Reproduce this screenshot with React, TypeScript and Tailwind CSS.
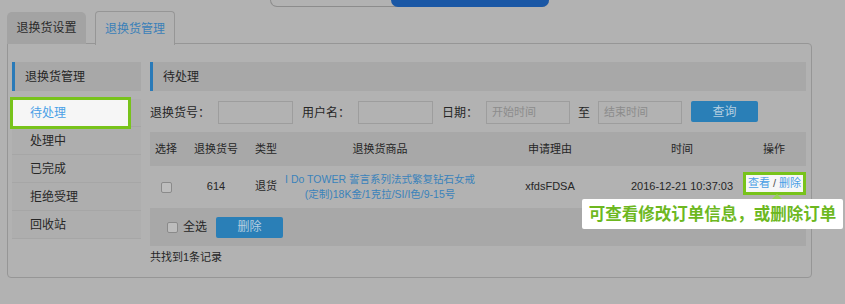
import React from 'react';

const sideItems = ['处理中', '已完成', '拒绝受理', '回收站'];

const Box = () => (
  <span className="inline-block w-[11px] h-[11px] border border-[#8a8a8a] rounded-[2px] bg-[#bdbdbd]"></span>
);

const Field = ({ w, hint }: { w: string; hint?: string }) => (
  <div className={`${w} h-[23px] border border-[#9d9d9d] flex items-center pl-[5px] text-[11px] text-[#8c8c8c]`}>
    {hint}
  </div>
);

export default function App() {
  return (
    <div className="w-[845px] h-[304px] overflow-hidden bg-[#b2b2b2] text-[#262626] font-['Liberation_Sans','Noto_Sans_CJK_SC',sans-serif]">
      {/* top switcher, cut off by the window */}
      <div className="ml-[270px] w-[279px] h-[7px] border border-t-0 border-[#8c8c8c] rounded-b-[12px] flex justify-end">
        <div className="w-[158px] h-[7px] -mr-px bg-[#1a57a5] rounded-b-[12px]"></div>
      </div>

      {/* tabs */}
      <div className="relative z-10 mt-[4px] pl-[7px] flex items-end text-[12px]">
        <div className="w-[79px] h-[32px] bg-[#a3a3a3] rounded-t-[5px] flex items-center justify-center text-[#2b2b2b]">
          退换货设置
        </div>
        <div className="ml-[9px] w-[80px] h-[34px] -mb-px bg-[#b2b2b2] border border-b-0 border-[#969696] rounded-t-[4px] flex items-center justify-center text-[#3a80b8]">
          退换货管理
        </div>
      </div>

      {/* panel */}
      <div className="-mt-px ml-[7px] w-[805px] h-[235px] border border-[#969696] rounded-tr-[4px] rounded-b-[4px] flex gap-[9px] pl-[4px] pt-[18px]">
        {/* sidebar */}
        <div className="w-[129px] text-[12px]">
          <div className="h-[29px] bg-[#a8a8a8] border-l-[3px] border-[#2a7ab8] pl-[10px] flex items-center">
            退换货管理
          </div>
          <div className="mt-[8px]">
            <div className="relative h-[28px] bg-[#aeaeae] border-b border-[#a6a6a6]">
              <div className="absolute -left-[2px] -top-[2px] w-[121px] h-[32px] border-[3px] border-[#78c31b] bg-[#f6f6f6] flex items-center pl-[17px] text-[#4aa0e6]">
                待处理
              </div>
            </div>
            {sideItems.map((t) => (
              <div key={t} className="h-[28px] bg-[#aeaeae] border-b border-[#a6a6a6] pl-[18px] flex items-center">
                {t}
              </div>
            ))}
          </div>
        </div>

        {/* content */}
        <div className="w-[656px]">
          <div className="h-[29px] bg-[#a8a8a8] border-l-[3px] border-[#2a7ab8] pl-[10px] flex items-center text-[12px]">
            待处理
          </div>

          <div className="mt-[10px] h-[23px] flex items-center text-[12px]">
            <span className="w-[68px]">退换货号：</span>
            <Field w="w-[75px]" />
            <span className="ml-[9px] w-[56px]">用户名：</span>
            <Field w="w-[75px]" />
            <span className="ml-[9px] w-[44px]">日期：</span>
            <Field w="w-[84px]" hint="开始时间" />
            <span className="ml-[8px] w-[20px]">至</span>
            <Field w="w-[84px]" hint="结束时间" />
            <button className="ml-[9px] w-[67px] h-[21px] self-start bg-[#2a7fb7] rounded-[2px] text-[#b5cfe1] text-[12px]">
              查询
            </button>
          </div>

          <div className="mt-[8px] h-[34px] bg-[#a8a8a8] grid grid-cols-[32px_68px_32px_196px_144px_120px_64px] items-center text-center text-[11px]">
            <span>选择</span>
            <span>退换货号</span>
            <span>类型</span>
            <span>退换货商品</span>
            <span>申请理由</span>
            <span>时间</span>
            <span>操作</span>
          </div>

          <div className="h-[41px] grid grid-cols-[32px_68px_32px_196px_144px_120px_64px] items-center text-center text-[11px]">
            <span className="flex justify-center pt-[2px]"><Box /></span>
            <span>614</span>
            <span>退货</span>
            <span className="text-[10.5px] leading-[15px] text-[#3a82bb]">
              I Do TOWER 誓言系列法式繁复钻石女戒
              <br />
              (定制)18K金/1克拉/SI/I色/9-15号
            </span>
            <span>xfdsFDSA</span>
            <span>2016-12-21 10:37:03</span>
            <span className="relative h-full">
              <span className="absolute left-[1px] top-[6px] w-[63px] h-[23px] border-[3px] border-[#78c31b] bg-[#f7f7f7] flex items-center justify-center gap-[3px] text-[11px]">
                <span className="text-[#4aa0e6]">查看</span>
                <span className="text-[#555]">/</span>
                <span className="text-[#4aa0e6]">删除</span>
              </span>
              <span className="absolute -left-[160px] top-[33px] w-[261px] h-[30px] bg-white rounded-[2px] flex items-center justify-center text-[16.5px] font-bold text-[#6db81f] whitespace-nowrap z-10">
                <span className="absolute left-[190px] -top-[5px] w-0 h-0 border-x-[5px] border-x-transparent border-b-[5px] border-b-[#9ad15a]"></span>
                可查看修改订单信息，或删除订单
              </span>
            </span>
          </div>

          <div className="mt-px h-[38px] bg-[#a8a8a8] flex items-center pl-[17px] text-[12px]">
            <Box />
            <span className="ml-[5px]">全选</span>
            <button className="ml-[9px] w-[67px] h-[21px] bg-[#2a7fb7] rounded-[2px] text-[#b5cfe1] text-[12px]">
              删除
            </button>
          </div>

          <div className="mt-[3px] text-[11px]">共找到1条记录</div>
        </div>
      </div>
    </div>
  );
}
